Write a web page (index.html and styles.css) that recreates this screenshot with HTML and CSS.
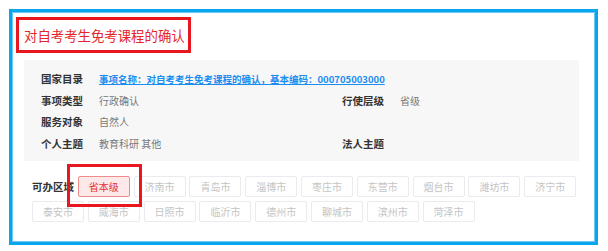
FILE: index.html
```html
<!DOCTYPE html>
<html lang="zh-CN">
<head>
<meta charset="utf-8">
<title>对自考考生免考课程的确认</title>
<link rel="stylesheet" href="styles.css">
</head>
<body>
<div class="frame">
  <div class="title-box">对自考考生免考课程的确认</div>
  <div class="info">
    <div class="lbl">国家目录</div>
    <div class="val span3"><a class="link" href="#">事项名称：对自考考生免考课程的确认，基本编码：000705003000</a></div>
    <div class="lbl">事项类型</div>
    <div class="val">行政确认</div>
    <div class="lbl">行使层级</div>
    <div class="val">省级</div>
    <div class="lbl">服务对象</div>
    <div class="val">自然人</div>
    <div class="lbl"></div>
    <div class="val"></div>
    <div class="lbl">个人主题</div>
    <div class="val">教育科研 其他</div>
    <div class="lbl">法人主题</div>
    <div class="val"></div>
  </div>
  <div class="region">
    <div class="region-lbl">可办区域</div>
    <div class="btn active">省本级<span class="mark"></span></div>
    <div class="btn">济南市</div>
    <div class="btn">青岛市</div>
    <div class="btn">淄博市</div>
    <div class="btn">枣庄市</div>
    <div class="btn">东营市</div>
    <div class="btn">烟台市</div>
    <div class="btn">潍坊市</div>
    <div class="btn">济宁市</div>
    <div class="btn">泰安市</div>
    <div class="btn">威海市</div>
    <div class="btn">日照市</div>
    <div class="btn">临沂市</div>
    <div class="btn">德州市</div>
    <div class="btn">聊城市</div>
    <div class="btn">滨州市</div>
    <div class="btn">菏泽市</div>
  </div>
</div>
</body>
</html>
```
FILE: styles.css
```css
html, body {
  margin: 0;
  padding: 0;
  background: #ffffff;
}
body {
  font-family: "Noto Sans CJK SC", "Noto Sans", sans-serif;
}
.frame {
  margin: 9px 0 0 9px;
  width: 589px;
  height: 236px;
  box-sizing: border-box;
  border: 3px solid #08a6ef;
  box-shadow: inset 0 0 0 1px #6cc7f3;
  padding: 5px 0 0 4px;
}
.title-box {
  box-sizing: border-box;
  width: 175px;
  height: 36px;
  border: 3px solid #e8161e;
  padding-left: 5px;
  display: flex;
  align-items: center;
  font-size: 13.4px;
  color: #e4262b;
  white-space: nowrap;
}
.info {
  margin: 7px 0 0 8px;
  width: 555px;
  height: 101px;
  box-sizing: border-box;
  background: #f7f7f7;
  padding: 8px 0 0 17px;
  display: grid;
  grid-template-columns: 58px 243px 58px 1fr;
  grid-auto-rows: 21.5px;
  align-items: center;
}
.lbl {
  font-size: 10.5px;
  font-weight: bold;
  color: #333333;
  white-space: nowrap;
}
.val {
  font-size: 10px;
  color: #777777;
  white-space: nowrap;
}
.span3 {
  grid-column: 2 / 5;
}
.link {
  font-size: 9.5px;
  color: #1b8cf0;
  font-weight: bold;
  text-decoration: underline;
}
.region {
  margin: 15px 0 0 16px;
  width: 560px;
  display: flex;
  flex-wrap: wrap;
  column-gap: 3.8px;
  row-gap: 4px;
}
.region-lbl {
  width: 42px;
  height: 21px;
  line-height: 21px;
  font-size: 10.5px;
  font-weight: bold;
  color: #333333;
  white-space: nowrap;
}
.btn {
  position: relative;
  box-sizing: border-box;
  width: 52px;
  height: 21px;
  border: 1px solid #e9ebef;
  border-radius: 2px;
  background: #ffffff;
  font-size: 10px;
  color: #c4c4c4;
  display: flex;
  align-items: center;
  justify-content: center;
}
.btn.active {
  background: #fde9e9;
  border-color: #f08b8b;
  color: #e53030;
}
.mark {
  position: absolute;
  z-index: 2;
  left: -12px;
  top: -13px;
  width: 75px;
  height: 43px;
  box-sizing: border-box;
  border: 3px solid #e8161e;
}
```
